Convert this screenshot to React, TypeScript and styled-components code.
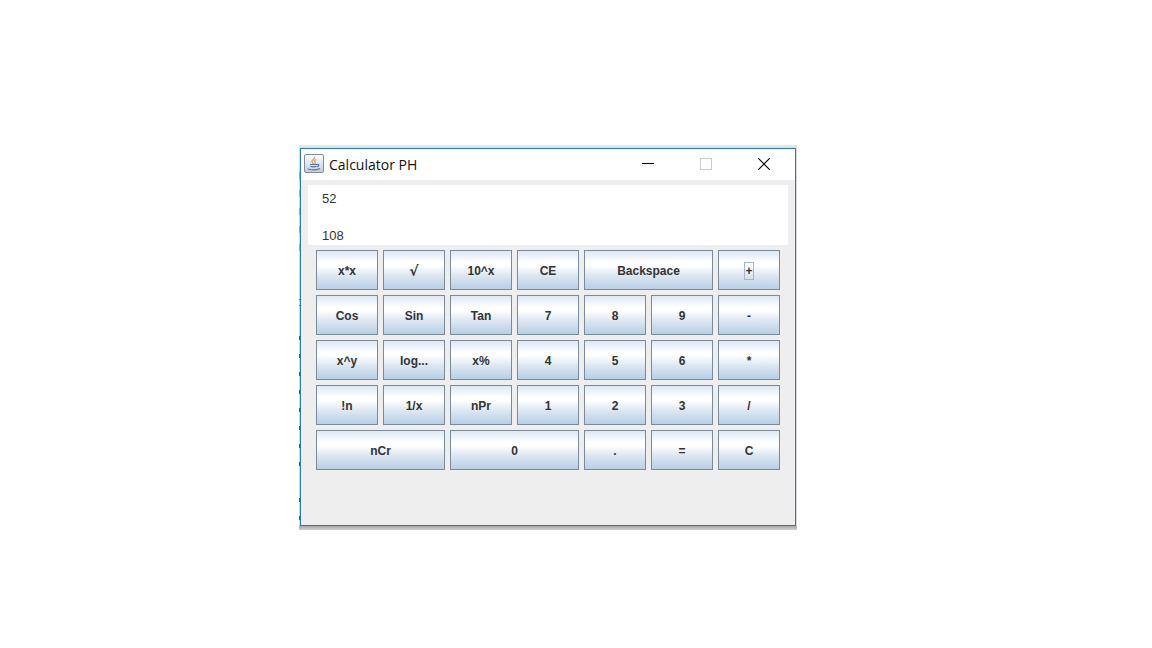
import React from "react";
import styled, { createGlobalStyle } from "styled-components";

const GlobalStyle = createGlobalStyle`
  * { box-sizing: border-box; }
  body { margin: 0; background: #fff; font-family: "Liberation Sans", Arial, sans-serif; }
`;

const Page = styled.main`
  padding: 145px 24px 24px 299px;
`;

const Backdrop = styled.div`
  display: grid;
  grid-template-columns: 1px minmax(0, 1fr) 1px;
  width: 100%;
  max-width: 498px;
  padding: 3px 0 4px;
  background: linear-gradient(to bottom, #ececec 0, #dedede 3px, #d6dade 4px, #d6dade calc(100% - 4px), #a6a6a6 calc(100% - 4px), #d0d0d0 100%);
`;

const Edge = styled.svg`
  display: block;
  width: 1px;
  height: 100%;
`;

const Window = styled.section`
  border: 1px solid #2b7ab3;
  background: #eee;
`;

const TitleBar = styled.header`
  display: flex;
  align-items: center;
  height: 31px;
  padding-left: 3px;
  background: #fff;
`;

const AppIcon = styled.svg`
  display: block;
  margin-bottom: 2px;
`;

const Title = styled.h1`
  flex: 1;
  margin: 0 0 0 5px;
  font: 400 14px/20px "Open Sans", "Segoe UI", sans-serif;
  color: #111;
`;

const Controls = styled.div`
  display: flex;
  height: 29px;
  margin-bottom: 2px;
  padding-right: 2px;
`;

const WindowButton = styled.button`
  display: flex;
  align-items: center;
  justify-content: center;
  width: 58px;
  padding: 0;
  border: 0;
  background: none;
`;

const Display = styled.div`
  display: grid;
  row-gap: 19px;
  margin: 5px 7px;
  padding: 5px 14px 0;
  background: #fff;
`;

const Readout = styled.input`
  width: 100%;
  height: 18px;
  padding: 0;
  border: 0;
  outline: 0;
  background: none;
  font: 13px/18px "Liberation Sans", Arial, sans-serif;
  color: #333;
`;

const Keypad = styled.div`
  display: grid;
  grid-template-columns: repeat(7, minmax(0, 1fr));
  grid-auto-rows: 40px;
  gap: 5px;
  padding: 0 15px 55px;
`;

const Key = styled.button<{ $span?: number }>`
  grid-column: span ${(p) => p.$span ?? 1};
  padding: 2px 0 0;
  border: 1px solid #7a8a99;
  background: linear-gradient(to bottom, #dde8f3 0%, #fff 30%, #fff 38%, #dbe6f1 66%, #b8cfe5 100%);
  font: 700 12px/18px "Liberation Sans", "DejaVu Sans", Arial, sans-serif;
  color: #333;
`;

const KeyLabel = styled.span<{ $focused?: boolean; $symbol?: boolean }>`
  display: block;
  width: fit-content;
  margin: 0 auto;
  padding: 0 1px;
  outline: ${(p) => (p.$focused ? "1px solid #a3b8cc" : "none")};
  outline-offset: -1px;
  ${(p) => p.$symbol && 'font: 700 14px/18px "DejaVu Sans", sans-serif;'}
`;

type KeySpec = { label: string; span?: number; focused?: boolean; symbol?: boolean };

const keys: KeySpec[] = [
  { label: "x*x" }, { label: "√", symbol: true }, { label: "10^x" }, { label: "CE" },
  { label: "Backspace", span: 2 }, { label: "+", focused: true },
  { label: "Cos" }, { label: "Sin" }, { label: "Tan" }, { label: "7" }, { label: "8" }, { label: "9" }, { label: "-" },
  { label: "x^y" }, { label: "log..." }, { label: "x%" }, { label: "4" }, { label: "5" }, { label: "6" }, { label: "*" },
  { label: "!n" }, { label: "1/x" }, { label: "nPr" }, { label: "1" }, { label: "2" }, { label: "3" }, { label: "/" },
  { label: "nCr", span: 2 }, { label: "0", span: 2 }, { label: "." }, { label: "=" }, { label: "C" },
];

const softMarks = [24, 42, 60, 78, 96];
const hairMarks = [151, 157];
const darkMarks = [188, 206, 224, 242, 260, 278, 296, 314, 350, 368];

const JavaIcon = () => (
  <AppIcon width="20" height="19" viewBox="0 0 20 19" aria-hidden="true">
    <defs>
      <linearGradient id="tile" x1="0" y1="0" x2="0" y2="1">
        <stop offset="0" stopColor="#fff" />
        <stop offset="1" stopColor="#c3cedb" />
      </linearGradient>
    </defs>
    <rect x="0.5" y="0.5" width="19" height="18" rx="1.5" fill="url(#tile)" stroke="#7f8b9c" />
    <path d="M10.5 3c1 2-3.5 3-2.5 5 .3.7 1 1 1.200 1.800M12.500 5.500c-2 1-2.500 1.500-1.500 2.700.5.6.2 1.200-.4 1.600" fill="none" stroke="#dd9a60" strokeWidth="1.300" />
    <path d="M6 10.500h7M6.500 12.300c2 .7 4 .7 6 0M13 10.500c2.500-.5 2.500 1.500 0 2.300M4 14.500c0 1.800 11 1.800 12-.2" fill="none" stroke="#55779b" strokeWidth="1.200" />
  </AppIcon>
);

export default function App() {
  return (
    <>
      <GlobalStyle />
      <Page>
        <Backdrop>
          <Edge aria-hidden="true">
            {softMarks.map((y) => (
              <rect key={y} x="0" y={y} width="1" height="7" fill="#a3abb8" />
            ))}
            {hairMarks.map((y) => (
              <rect key={y} x="0" y={y} width="1" height="1" fill="#5577a8" />
            ))}
            {darkMarks.map((y) => (
              <rect key={y} x="0" y={y} width="1" height="4" fill="#4d4a94" />
            ))}
          </Edge>
          <Window aria-label="Calculator PH">
            <TitleBar>
              <JavaIcon />
              <Title>Calculator PH</Title>
              <Controls>
                <WindowButton type="button" aria-label="Minimize">
                  <svg width="12" height="12" viewBox="0 0 12 12" shapeRendering="crispEdges">
                    <path d="M0 5.500h12" stroke="#000" />
                  </svg>
                </WindowButton>
                <WindowButton type="button" aria-label="Maximize" disabled>
                  <svg width="12" height="12" viewBox="0 0 12 12" shapeRendering="crispEdges">
                    <rect x="0.5" y="0.5" width="11" height="11" fill="none" stroke="#ccc" />
                  </svg>
                </WindowButton>
                <WindowButton type="button" aria-label="Close">
                  <svg width="12" height="12" viewBox="0 0 12 12">
                    <path d="M0 0l12 12M12 0L0 12" stroke="#000" strokeWidth="1.200" />
                  </svg>
                </WindowButton>
              </Controls>
            </TitleBar>
            <Display>
              <Readout readOnly aria-label="First number" defaultValue="52" />
              <Readout readOnly aria-label="Second number" defaultValue="108" />
            </Display>
            <Keypad>
              {keys.map((k) => (
                <Key key={k.label} type="button" $span={k.span}>
                  <KeyLabel $focused={k.focused} $symbol={k.symbol}>{k.label}</KeyLabel>
                </Key>
              ))}
            </Keypad>
          </Window>
        </Backdrop>
      </Page>
    </>
  );
}
